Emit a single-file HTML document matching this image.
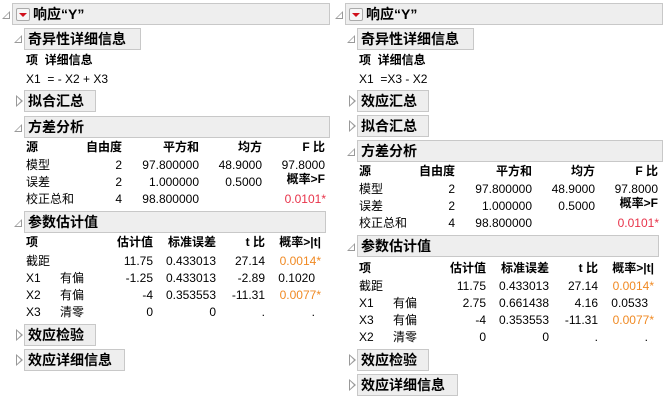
<!DOCTYPE html>
<html><head><meta charset="utf-8"><style>
body{margin:0;width:667px;height:400px;background:#fff;overflow:hidden;position:relative;font-family:"Liberation Sans","Noto Sans CJK SC",sans-serif;font-size:12px;color:#000}
.p{position:absolute;top:0;width:334px;height:400px}
.t{position:absolute;line-height:16px;white-space:nowrap}
.r{position:absolute;line-height:16px;white-space:nowrap;transform:translateX(-100%)}
.b{font-weight:bold}
.box{position:absolute;background:#eeeeee;border:1px solid #c8c8c8;box-sizing:border-box;height:22px;font-weight:bold;font-size:14px;line-height:20px;padding-left:3px}
.tri{position:absolute;width:0;height:0}
.open{border-left:8px solid transparent;border-bottom:8px solid #999}
.open:after{content:"";position:absolute;left:-6px;top:2px;border-left:5px solid transparent;border-bottom:5px solid #fff}
.cl{border-top:6px solid transparent;border-bottom:6px solid transparent;border-left:7px solid #999}
.cl:after{content:"";position:absolute;left:-6px;top:-4px;border-top:4px solid transparent;border-bottom:4px solid transparent;border-left:4px solid #fff}
.red{color:#e8334a}.or{color:#f08a24}
</style></head><body>

<div class="p" style="left:0">
<div class="tri open" style="left:2px;top:11px"></div>
<div class="box" style="left:12px;top:3px;width:318px;padding-left:20px">响应“Y”</div>
<div style="position:absolute;left:16px;top:8px;width:12px;height:11px;border:1px solid #aaa;background:#f6f6f6;border-radius:2px"><div style="position:absolute;left:2px;top:4px;border-left:4px solid transparent;border-right:4px solid transparent;border-top:4px solid #d0101b"></div></div>

<div class="tri open" style="left:14px;top:35px"></div>
<div class="box" style="left:24px;top:28px;width:117px">奇异性详细信息</div>
<div class="t b" style="left:26px;top:52px">项&nbsp;&nbsp;详细信息</div>
<div class="t" style="left:26px;top:71px">X1&nbsp;&nbsp;= - X2 + X3</div>

<div class="tri cl" style="left:16px;top:95px"></div>
<div class="box" style="left:24px;top:90px;width:72px">拟合汇总</div>

<div class="tri open" style="left:14px;top:124px"></div>
<div class="box" style="left:24px;top:116px;width:306px">方差分析</div>
<div class="t b" style="left:26px;top:139px">源</div>
<div class="r b" style="left:122px;top:139px">自由度</div>
<div class="r b" style="left:199px;top:139px">平方和</div>
<div class="r b" style="left:262px;top:139px">均方</div>
<div class="r b" style="left:325px;top:139px">F 比</div>
<div class="t" style="left:26px;top:157px">模型</div>
<div class="r" style="left:122px;top:157px">2</div>
<div class="r" style="left:199px;top:157px">97.800000</div>
<div class="r" style="left:262px;top:157px">48.9000</div>
<div class="r" style="left:325px;top:157px">97.8000</div>
<div class="t" style="left:26px;top:174px">误差</div>
<div class="r" style="left:122px;top:174px">2</div>
<div class="r" style="left:199px;top:174px">1.000000</div>
<div class="r" style="left:262px;top:174px">0.5000</div>
<div class="r b" style="left:325px;top:171px">概率&gt;F</div>
<div class="t" style="left:26px;top:191px">校正总和</div>
<div class="r" style="left:122px;top:191px">4</div>
<div class="r" style="left:199px;top:191px">98.800000</div>
<div class="r red" style="left:326px;top:191px">0.0101*</div>

<div class="tri open" style="left:14px;top:219px"></div>
<div class="box" style="left:24px;top:211px;width:302px">参数估计值</div>
<div class="t b" style="left:26px;top:234px">项</div>
<div class="r b" style="left:153px;top:234px">估计值</div>
<div class="r b" style="left:216px;top:234px">标准误差</div>
<div class="r b" style="left:265px;top:234px">t 比</div>
<div class="r b" style="left:321px;top:234px">概率&gt;|t|</div>
<div class="t" style="left:26px;top:253px">截距</div>
<div class="r" style="left:153px;top:253px">11.75</div><div class="r" style="left:216px;top:253px">0.433013</div><div class="r" style="left:265px;top:253px">27.14</div><div class="r or" style="left:321px;top:253px">0.0014*</div>
<div class="t" style="left:26px;top:270px">X1</div><div class="t" style="left:60px;top:270px">有偏</div>
<div class="r" style="left:153px;top:270px">-1.25</div><div class="r" style="left:216px;top:270px">0.433013</div><div class="r" style="left:265px;top:270px">-2.89</div><div class="r" style="left:315px;top:270px">0.1020</div>
<div class="t" style="left:26px;top:287px">X2</div><div class="t" style="left:60px;top:287px">有偏</div>
<div class="r" style="left:153px;top:287px">-4</div><div class="r" style="left:216px;top:287px">0.353553</div><div class="r" style="left:265px;top:287px">-11.31</div><div class="r or" style="left:321px;top:287px">0.0077*</div>
<div class="t" style="left:26px;top:304px">X3</div><div class="t" style="left:60px;top:304px">清零</div>
<div class="r" style="left:153px;top:304px">0</div><div class="r" style="left:216px;top:304px">0</div><div class="r" style="left:265px;top:304px">.</div><div class="r" style="left:315px;top:304px">.</div>

<div class="tri cl" style="left:16px;top:329px"></div>
<div class="box" style="left:24px;top:324px;width:72px">效应检验</div>
<div class="tri cl" style="left:16px;top:354px"></div>
<div class="box" style="left:24px;top:349px;width:101px">效应详细信息</div>
</div>

<div class="p" style="left:333px">
<div class="tri open" style="left:2px;top:11px"></div>
<div class="box" style="left:12px;top:3px;width:318px;padding-left:20px">响应“Y”</div>
<div style="position:absolute;left:16px;top:8px;width:12px;height:11px;border:1px solid #aaa;background:#f6f6f6;border-radius:2px"><div style="position:absolute;left:2px;top:4px;border-left:4px solid transparent;border-right:4px solid transparent;border-top:4px solid #d0101b"></div></div>

<div class="tri open" style="left:14px;top:35px"></div>
<div class="box" style="left:24px;top:28px;width:117px">奇异性详细信息</div>
<div class="t b" style="left:26px;top:52px">项&nbsp;&nbsp;详细信息</div>
<div class="t" style="left:26px;top:71px">X1&nbsp;&nbsp;=X3 - X2</div>

<div class="tri cl" style="left:16px;top:95px"></div>
<div class="box" style="left:24px;top:90px;width:72px">效应汇总</div>
<div class="tri cl" style="left:16px;top:120px"></div>
<div class="box" style="left:24px;top:115px;width:72px">拟合汇总</div>

<div class="tri open" style="left:14px;top:148px"></div>
<div class="box" style="left:24px;top:140px;width:306px">方差分析</div>
<div class="t b" style="left:26px;top:163px">源</div>
<div class="r b" style="left:122px;top:163px">自由度</div>
<div class="r b" style="left:199px;top:163px">平方和</div>
<div class="r b" style="left:262px;top:163px">均方</div>
<div class="r b" style="left:325px;top:163px">F 比</div>
<div class="t" style="left:26px;top:181px">模型</div>
<div class="r" style="left:122px;top:181px">2</div>
<div class="r" style="left:199px;top:181px">97.800000</div>
<div class="r" style="left:262px;top:181px">48.9000</div>
<div class="r" style="left:325px;top:181px">97.8000</div>
<div class="t" style="left:26px;top:198px">误差</div>
<div class="r" style="left:122px;top:198px">2</div>
<div class="r" style="left:199px;top:198px">1.000000</div>
<div class="r" style="left:262px;top:198px">0.5000</div>
<div class="r b" style="left:325px;top:195px">概率&gt;F</div>
<div class="t" style="left:26px;top:215px">校正总和</div>
<div class="r" style="left:122px;top:215px">4</div>
<div class="r" style="left:199px;top:215px">98.800000</div>
<div class="r red" style="left:326px;top:215px">0.0101*</div>

<div class="tri open" style="left:14px;top:243px"></div>
<div class="box" style="left:24px;top:235px;width:302px">参数估计值</div>
<div class="t b" style="left:26px;top:260px">项</div>
<div class="r b" style="left:153px;top:260px">估计值</div>
<div class="r b" style="left:216px;top:260px">标准误差</div>
<div class="r b" style="left:265px;top:260px">t 比</div>
<div class="r b" style="left:321px;top:260px">概率&gt;|t|</div>
<div class="t" style="left:26px;top:278px">截距</div>
<div class="r" style="left:153px;top:278px">11.75</div><div class="r" style="left:216px;top:278px">0.433013</div><div class="r" style="left:265px;top:278px">27.14</div><div class="r or" style="left:321px;top:278px">0.0014*</div>
<div class="t" style="left:26px;top:295px">X1</div><div class="t" style="left:60px;top:295px">有偏</div>
<div class="r" style="left:153px;top:295px">2.75</div><div class="r" style="left:216px;top:295px">0.661438</div><div class="r" style="left:265px;top:295px">4.16</div><div class="r" style="left:315px;top:295px">0.0533</div>
<div class="t" style="left:26px;top:312px">X3</div><div class="t" style="left:60px;top:312px">有偏</div>
<div class="r" style="left:153px;top:312px">-4</div><div class="r" style="left:216px;top:312px">0.353553</div><div class="r" style="left:265px;top:312px">-11.31</div><div class="r or" style="left:321px;top:312px">0.0077*</div>
<div class="t" style="left:26px;top:329px">X2</div><div class="t" style="left:60px;top:329px">清零</div>
<div class="r" style="left:153px;top:329px">0</div><div class="r" style="left:216px;top:329px">0</div><div class="r" style="left:265px;top:329px">.</div><div class="r" style="left:315px;top:329px">.</div>

<div class="tri cl" style="left:16px;top:354px"></div>
<div class="box" style="left:24px;top:349px;width:72px">效应检验</div>
<div class="tri cl" style="left:16px;top:379px"></div>
<div class="box" style="left:24px;top:374px;width:101px">效应详细信息</div>
</div>
</body></html>
